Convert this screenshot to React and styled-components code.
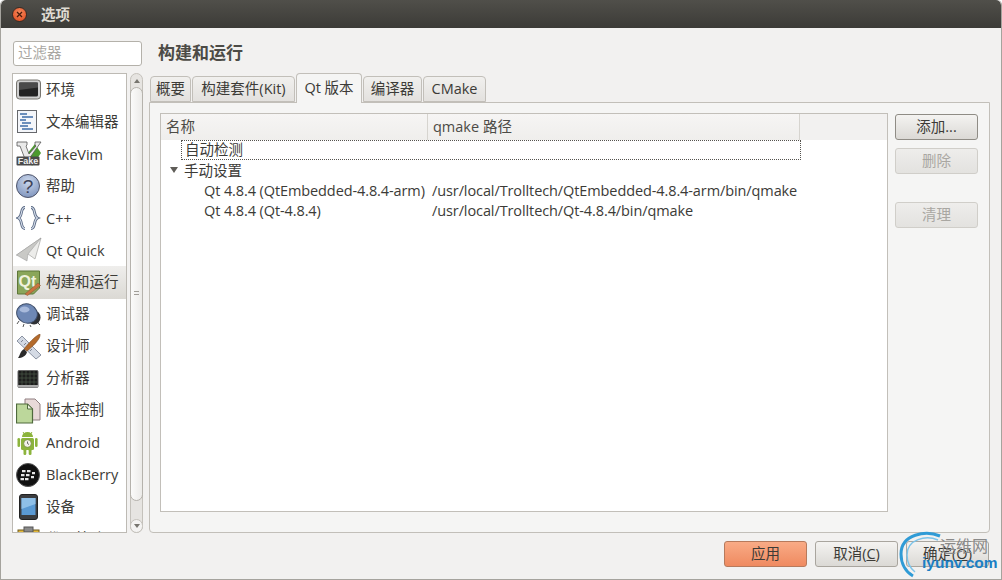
import React from 'react';
import styled, { createGlobalStyle } from 'styled-components';

const FONT = '"Open Sans", "Noto Sans", "Noto Sans CJK SC", sans-serif';

const GlobalStyle = createGlobalStyle`
  html, body {
    margin: 0;
    padding: 0;
    background: #ffffff;
  }
  body {
    font-family: ${FONT};
    font-size: 14.5px;
    color: #3c3b37;
  }
`;

const Window = styled.div`
  position: relative;
  width: 1002px;
  height: 580px;
  box-sizing: border-box;
  display: flex;
  flex-direction: column;
  background: #f2f1f0;
  border-radius: 5px 5px 0 0;
  border-bottom: 1px solid #a5a39d;
  border-left: 1px solid #a5a39d;
  border-right: 1px solid #a5a39d;
  overflow: hidden;
`;

const TitleBar = styled.div`
  height: 28px;
  flex: none;
  display: flex;
  align-items: center;
  gap: 14px;
  padding-left: 11px;
  background: linear-gradient(#504f4a, #3c3b37);
  color: #dfdbd2;
  font-size: 14.5px;
  font-weight: 700;
  border-radius: 5px 5px 0 0;
`;

const TitleText = styled.span`
  padding-bottom: 2px;
`;

const CloseButton = styled.div`
  width: 15px;
  height: 15px;
  margin-top: 1px;
  border-radius: 50%;
  background: radial-gradient(circle at 50% 35%, #f58a5d, #e0461b);
  border: 1px solid #3a2a22;
  box-sizing: border-box;
  display: flex;
  align-items: center;
  justify-content: center;
`;

const Main = styled.div`
  flex: 1;
  min-height: 0;
  display: flex;
  gap: 6px;
  padding: 13px 11px 0 11px;
`;

const Sidebar = styled.div`
  width: 131px;
  flex: none;
  display: flex;
  flex-direction: column;
  gap: 7px;
`;

const Filter = styled.div`
  height: 25px;
  box-sizing: border-box;
  width: 129px;
  margin-left: 1px;
  border: 1px solid #b4b1aa;
  border-radius: 3px;
  background: #ffffff;
  color: #a9a7a2;
  padding-left: 4px;
  line-height: 22px;
`;

const SideRow = styled.div`
  display: flex;
  gap: 3px;
  height: 460px;
`;

const CategoryList = styled.div`
  width: 115px;
  box-sizing: border-box;
  border: 1px solid #bdbab4;
  background: #ffffff;
  overflow: hidden;
`;

const Category = styled.div`
  height: 32.08px;
  display: flex;
  align-items: center;
  gap: 4px;
  padding-left: 3px;
  color: #3c3b37;
  white-space: nowrap;
  background: ${(p) => (p.$active ? 'linear-gradient(#efeeec, #dbd9d4)' : 'transparent')};
`;

const CategoryLabel = styled.span`
  padding-bottom: ${(p) => (p.$latin ? 0 : 4)}px;
`;

const IconBox = styled.span`
  width: 26px;
  height: 26px;
  flex: none;
  display: block;
`;

const ScrollTrack = styled.div`
  position: relative;
  width: 13px;
  box-sizing: border-box;
  border: 1px solid #c4c1bb;
  border-radius: 7px;
  background: #e6e4e1;
`;

const ScrollThumb = styled.div`
  position: absolute;
  left: -1px;
  top: 13px;
  width: 13px;
  height: 414px;
  box-sizing: border-box;
  border: 1px solid #b5b2ac;
  border-radius: 7px;
  background: linear-gradient(90deg, #fbfbfa, #ecebe9);
  display: flex;
  align-items: center;
  justify-content: center;
`;

const Grip = styled.div`
  width: 5px;
  height: 6px;
  background: repeating-linear-gradient(#a09d97 0 1px, transparent 1px 3px);
`;

const ArrowUp = styled.div`
  position: absolute;
  left: 3px;
  top: 5px;
  border-left: 3px solid transparent;
  border-right: 3px solid transparent;
  border-bottom: 4px solid #77756f;
`;

const Stepper = styled.div`
  position: absolute;
  left: -1px;
  bottom: -1px;
  width: 13px;
  height: 14px;
  box-sizing: border-box;
  border: 1px solid #c4c1bb;
  border-radius: 7px 7px 7px 7px;
  background: #f4f3f2;
  display: flex;
  align-items: center;
  justify-content: center;
`;

const ArrowDown = styled.div`
  border-left: 3px solid transparent;
  border-right: 3px solid transparent;
  border-top: 4px solid #77756f;
`;

const Content = styled.div`
  flex: 1;
  min-width: 0;
  display: flex;
  flex-direction: column;
`;

const Heading = styled.div`
  height: 32px;
  padding-left: 9px;
  font-size: 17px;
  font-weight: 700;
  line-height: 23px;
  color: #4c4b46;
`;

const TabBar = styled.div`
  display: flex;
  height: 29px;
  align-items: flex-end;
  padding-left: 1px;
  gap: 1px;
  position: relative;
  z-index: 1;
`;

const Tab = styled.div`
  width: ${(p) => p.$w}px;
  height: ${(p) => (p.$active ? 30 : 26)}px;
  box-sizing: border-box;
  text-align: center;
  line-height: ${(p) => (p.$active ? 27 : 23)}px;
  border: 1px solid #c2bfb9;
  border-bottom: ${(p) => (p.$active ? 'none' : '1px solid #c2bfb9')};
  border-radius: 4px 4px 0 0;
  background: ${(p) => (p.$active ? '#f5f5f4' : 'linear-gradient(#f1f0ee, #e3e1de)')};
  margin-bottom: ${(p) => (p.$active ? -1 : 0)}px;
  white-space: nowrap;
`;

const Pane = styled.div`
  width: 841px;
  height: 431px;
  box-sizing: border-box;
  border: 1px solid #c2bfb9;
  border-radius: 0 0 4px 4px;
  background: #f5f5f4;
  padding: 10px 10px;
  display: flex;
  gap: 7px;
`;

const Tree = styled.div`
  width: 728px;
  height: 399px;
  box-sizing: border-box;
  border: 1px solid #c2bfb9;
  background: #ffffff;
  display: flex;
  flex-direction: column;
`;

const TreeHeader = styled.div`
  height: 26px;
  flex: none;
  display: flex;
  background: #f2f1f0;
`;

const HeaderCell = styled.div`
  width: ${(p) => p.$w}px;
  box-sizing: border-box;
  padding-left: 5px;
  line-height: 26px;
  border-right: 1px solid #d6d4cf;
  background: linear-gradient(#f6f5f4, #efeeec);
  color: #4c4b46;
`;

const TreeRow = styled.div`
  height: 20.5px;
  display: flex;
  align-items: center;
  white-space: nowrap;
  letter-spacing: ${(p) => (p.$latin ? '-0.1px' : 'normal')};
`;

const AutoRow = styled.div`
  width: 620px;
  height: 19.5px;
  margin-left: 20px;
  box-sizing: border-box;
  border: 1px dotted #55534e;
  line-height: 18px;
  padding-left: 3px;
`;

const Caret = styled.span`
  width: 0;
  height: 0;
  margin: 0 6px 0 9px;
  border-left: 4px solid transparent;
  border-right: 4px solid transparent;
  border-top: 6px solid #5f5d58;
`;

const NameCell = styled.span`
  width: 271px;
  flex: none;
  box-sizing: border-box;
  padding-left: 43px;
`;

const Buttons = styled.div`
  display: flex;
  flex-direction: column;
  width: 83px;
  gap: 8px;
  padding-top: 1px;
`;

const Btn = styled.div`
  width: 83px;
  height: 26px;
  flex: none;
  box-sizing: border-box;
  border-radius: 3px;
  text-align: center;
  line-height: 24px;
  white-space: nowrap;
  border: 1px solid #a9a59e;
  color: #3c3b37;
  background: linear-gradient(#f4f3f1, #dbd9d5);
  ${(p) => p.$primary && 'border-color: #8f8c85;'}
  ${(p) => p.$disabled && `
    color: #a9a7a2;
    border-color: #d0cec9;
    background: linear-gradient(#eeedeb, #e3e2df);
  `}
  ${(p) => p.$apply && `
    border-color: #b77a5c;
    background: linear-gradient(#f9ab86, #ef8a60);
  `}
  ${(p) => p.$gapTop && `margin-top: ${p.$gapTop}px;`}
`;

const Footer = styled.div`
  height: 46px;
  flex: none;
  box-sizing: border-box;
  display: flex;
  justify-content: flex-end;
  gap: 8px;
  padding: 8px 12px 0 0;
`;

const Mnemonic = styled.span`
  text-decoration: underline;
`;

const Watermark = styled.div`
  position: absolute;
  left: 895px;
  top: 530px;
  width: 104px;
  height: 48px;
  pointer-events: none;
`;

const WatermarkCn = styled.div`
  position: absolute;
  left: 44px;
  top: 6px;
  color: #8a8a8a;
  font-size: 16px;
  line-height: 20px;
`;

const WatermarkEn = styled.div`
  position: absolute;
  left: 26px;
  top: 24px;
  color: #1b7fc4;
  font-family: "Liberation Sans", sans-serif;
  font-size: 15.5px;
  font-weight: 700;
  line-height: 18px;
  white-space: nowrap;
`;

const icons = {
  env: (
    <svg viewBox="0 0 26 26" width="26" height="26">
      <rect x="0.5" y="3" width="24" height="19" rx="3" fill="#cfcfcf" stroke="#77756f" />
      <rect x="3" y="5.500" width="19" height="14" rx="1.500" fill="#232323" />
      <path d="M3 5.500h19v5L3 13z" fill="#4a4a4a" />
    </svg>
  ),
  text: (
    <svg viewBox="0 0 26 26" width="26" height="26">
      <rect x="1.500" y="1.500" width="19" height="22" fill="#f4f6fa" stroke="#66686c" />
      <path d="M4 5h7M6 8h11M4 11h6M6 14h9M4 17h8M6 20h11" stroke="#3f6ea8" strokeWidth="1.400" />
    </svg>
  ),
  vim: (
    <svg viewBox="0 0 26 26" width="26" height="26">
      <path d="M11 13l8-10 6 9-9 13z" fill="#4d9a2e" />
      <path d="M1 1h10v3l-1 1 3 8 7-8-1-1V1h6L13 18H9L4 5H1z" fill="#e9e9e9" stroke="#555" strokeWidth="0.800" />
      <rect x="0.500" y="15.500" width="23" height="9" fill="#4a4a4a" rx="1" />
      <text x="12" y="23" textAnchor="middle" fontFamily="Liberation Sans, sans-serif" fontSize="9" fontWeight="700" fill="#efefef">Fake</text>
    </svg>
  ),
  help: (
    <svg viewBox="0 0 26 26" width="26" height="26">
      <defs>
        <radialGradient id="helpFill" cx="50%" cy="30%" r="75%">
          <stop offset="0" stopColor="#ccd8ec" />
          <stop offset="1" stopColor="#7c92bc" />
        </radialGradient>
      </defs>
      <circle cx="12" cy="13" r="11.500" fill="url(#helpFill)" stroke="#50556a" />
      <text x="12" y="20" textAnchor="middle" fontFamily="Liberation Sans, sans-serif" fontSize="19" fill="#3d4258">?</text>
    </svg>
  ),
  cpp: (
    <svg viewBox="0 0 26 26" width="26" height="26">
      <path d="M9 2.500C4 2.500 7 11 2.500 13 7 15 4 23.500 9 23.500M15 2.500c5 0 2 8.500 6.500 10.500C17 15 20 23.500 15 23.500" fill="none" stroke="#5b6a84" strokeWidth="2.800" />
      <path d="M9 2.500C4 2.500 7 11 2.500 13 7 15 4 23.500 9 23.500M15 2.500c5 0 2 8.500 6.500 10.500C17 15 20 23.500 15 23.500" fill="none" stroke="#d3dcea" strokeWidth="1.100" />
    </svg>
  ),
  quick: (
    <svg viewBox="0 0 26 26" width="26" height="26">
      <path d="M0.500 18L25 1 19 22 12 17z" fill="#ececea" stroke="#a5a5a2" strokeWidth="0.700" />
      <path d="M0.500 18L25 1 12 17 11 24z" fill="#c9c9c6" stroke="#999" strokeWidth="0.500" />
    </svg>
  ),
  build: (
    <svg viewBox="0 0 26 26" width="26" height="26">
      <path d="M1.500 1h22v17l-6 6h-16z" fill="#8aa65a" stroke="#5d7638" />
      <text x="11.500" y="17" textAnchor="middle" fontFamily="Liberation Sans, sans-serif" fontSize="16" fontWeight="700" fill="#f0f2dd">Qt</text>
      <path d="M9 24l13-11 2.500 2.500-13 10z" fill="#c9743f" stroke="#8e5b3a" strokeWidth="0.600" />
    </svg>
  ),
  debug: (
    <svg viewBox="0 0 26 26" width="26" height="26">
      <path d="M3 19l-2 3M8 22l-1 3M14 23l1 2M21 20l3 3" stroke="#555" strokeWidth="1" />
      <ellipse cx="18" cy="15.500" rx="6.500" ry="7" fill="#2f3136" />
      <ellipse cx="11" cy="11.500" rx="10.500" ry="9.500" transform="rotate(25 11 11.500)" fill="#6e88b5" stroke="#3e4d68" />
      <ellipse cx="8.500" cy="7.500" rx="5" ry="3" fill="#a8badb" />
    </svg>
  ),
  design: (
    <svg viewBox="0 0 26 26" width="26" height="26">
      <path d="M1 7l5-5 19 19-5 4z" fill="#d4dae4" stroke="#8b93a3" />
      <path d="M5 8l2-2M8 11l2-2M11 14l2-2M14 17l2-2" stroke="#7d8493" />
      <path d="M24 0c1 5-8 13-13 17l-3-2C12 10 19 2 24 0z" fill="#b46b2c" stroke="#7d481d" strokeWidth="0.600" />
      <path d="M8 15l3 3c-1 4-5 6-9 6 2-2 2-7 6-9z" fill="#2b2b2b" />
    </svg>
  ),
  analyze: (
    <svg viewBox="0 0 26 26" width="26" height="26">
      <rect x="2" y="4.500" width="20" height="17" rx="1" fill="#1d1d1d" stroke="#666" />
      <path d="M6 5v14M10 5v14M14 5v14M18 5v14M3 8h18M3 12h18M3 16h18" stroke="#4b5a48" strokeWidth="0.700" />
      <rect x="2" y="19" width="20" height="2.500" fill="#a9a9a9" />
    </svg>
  ),
  version: (
    <svg viewBox="0 0 26 26" width="26" height="26">
      <path d="M9 1h10l5 5v16H9z" fill="#e8d9d8" stroke="#8f7f80" />
      <path d="M0.500 6h11l5 5v14H0.500z" fill="#bcd79b" stroke="#4f6a3d" strokeWidth="1.200" />
      <path d="M11.500 6v5h5z" fill="#eef5e2" stroke="#4f6a3d" />
    </svg>
  ),
  android: (
    <svg viewBox="0 0 26 26" width="26" height="26">
      <path d="M6 7a5.500 5 0 0 1 11 0z" fill="#8cb43c" />
      <path d="M7 2l2 3M16 2l-2 3" stroke="#8cb43c" />
      <rect x="5" y="8" width="13" height="12" rx="1.500" fill="#8cb43c" />
      <rect x="1.500" y="8" width="2.600" height="9" rx="1.300" fill="#8cb43c" />
      <rect x="19" y="8" width="2.600" height="9" rx="1.300" fill="#8cb43c" />
      <rect x="7.500" y="19" width="2.800" height="6" rx="1.300" fill="#8cb43c" />
      <rect x="12.700" y="19" width="2.800" height="6" rx="1.300" fill="#8cb43c" />
      <circle cx="11.500" cy="13.500" r="3.800" fill="#f2f2e8" stroke="#607a2a" strokeWidth="0.600" />
      <path d="M11.500 11.500v2l1.500 1" stroke="#444" fill="none" strokeWidth="0.800" />
    </svg>
  ),
  blackberry: (
    <svg viewBox="0 0 26 26" width="26" height="26">
      <circle cx="12" cy="13" r="11.500" fill="#111" stroke="#555" />
      <path d="M6 8h3.500v2.300H6zM11 8h3.500v2.300H11zM5 12h3.500v2.300H5zM10 12h3.500v2.300H10zM4.500 16H8v2.300H4.500zM9 16h3.500v2.300H9zM16 10h3v2.300h-3zM15 14h3v2.300h-3z" fill="#e6e6e6" />
    </svg>
  ),
  device: (
    <svg viewBox="0 0 26 26" width="26" height="26">
      <rect x="3.500" y="0.500" width="18" height="25" rx="2.500" fill="#3b3d40" stroke="#222" />
      <rect x="5.500" y="4" width="14" height="17" fill="#5a9ad4" />
      <path d="M5.500 4h14v6L5.500 15z" fill="#8fc0e8" />
    </svg>
  ),
  clip: (
    <svg viewBox="0 0 26 26" width="26" height="26">
      <rect x="2" y="4" width="21" height="21" fill="#e3b93b" stroke="#6f5b1f" />
      <rect x="8" y="1" width="9" height="5" fill="#8a8a8a" stroke="#555" />
    </svg>
  ),
};

const categories = [
  { icon: 'env', label: '环境' },
  { icon: 'text', label: '文本编辑器' },
  { icon: 'vim', label: 'FakeVim', latin: true },
  { icon: 'help', label: '帮助' },
  { icon: 'cpp', label: 'C++', latin: true },
  { icon: 'quick', label: 'Qt Quick', latin: true },
  { icon: 'build', label: '构建和运行', active: true },
  { icon: 'debug', label: '调试器' },
  { icon: 'design', label: '设计师' },
  { icon: 'analyze', label: '分析器' },
  { icon: 'version', label: '版本控制' },
  { icon: 'android', label: 'Android', latin: true },
  { icon: 'blackberry', label: 'BlackBerry', latin: true },
  { icon: 'device', label: '设备' },
  { icon: 'clip', label: '代码粘贴' },
];

const tabs = [
  ['概要', 41],
  ['构建套件(Kit)', 103],
  ['Qt 版本', 66, true],
  ['编译器', 59],
  ['CMake', 63],
];

const versions = [
  ['Qt 4.8.4 (QtEmbedded-4.8.4-arm)', '/usr/local/Trolltech/QtEmbedded-4.8.4-arm/bin/qmake'],
  ['Qt 4.8.4 (Qt-4.8.4)', '/usr/local/Trolltech/Qt-4.8.4/bin/qmake'],
];

export default function App() {
  return (
    <>
      <GlobalStyle />
      <Window>
        <TitleBar>
          <CloseButton>
            <svg viewBox="0 0 7 7" width="7" height="7">
              <path d="M1 1l5 5M6 1L1 6" stroke="#4a1c0c" strokeWidth="1.300" />
            </svg>
          </CloseButton>
          <TitleText>选项</TitleText>
        </TitleBar>
        <Main>
          <Sidebar>
            <Filter>过滤器</Filter>
            <SideRow>
              <CategoryList>
                {categories.map(({ icon, label, latin, active }) => (
                  <Category key={label} $active={active}>
                    <IconBox>{icons[icon]}</IconBox>
                    <CategoryLabel $latin={latin}>{label}</CategoryLabel>
                  </Category>
                ))}
              </CategoryList>
              <ScrollTrack>
                <ArrowUp />
                <ScrollThumb><Grip /></ScrollThumb>
                <Stepper><ArrowDown /></Stepper>
              </ScrollTrack>
            </SideRow>
          </Sidebar>
          <Content>
            <Heading>构建和运行</Heading>
            <TabBar>
              {tabs.map(([label, w, active]) => (
                <Tab key={label} $w={w} $active={active}>{label}</Tab>
              ))}
            </TabBar>
            <Pane>
              <Tree>
                <TreeHeader>
                  <HeaderCell $w={267}>名称</HeaderCell>
                  <HeaderCell $w={372}>qmake 路径</HeaderCell>
                </TreeHeader>
                <AutoRow>自动检测</AutoRow>
                <TreeRow><Caret />手动设置</TreeRow>
                {versions.map(([name, path]) => (
                  <TreeRow key={name} $latin>
                    <NameCell>{name}</NameCell>
                    {path}
                  </TreeRow>
                ))}
              </Tree>
              <Buttons>
                <Btn $primary>添加...</Btn>
                <Btn $disabled>删除</Btn>
                <Btn $disabled $gapTop={20}>清理</Btn>
              </Buttons>
            </Pane>
          </Content>
        </Main>
        <Footer>
          <Btn $apply>应用</Btn>
          <Btn>取消(<Mnemonic>C</Mnemonic>)</Btn>
          <Btn>确定(<Mnemonic>O</Mnemonic>)</Btn>
        </Footer>
        <Watermark>
          <svg viewBox="0 0 50 48" width="50" height="48">
            <path d="M44 6C30 0 5 4 5 24c0 10 5 18 12 22" fill="none" stroke="#2f9bd6" strokeWidth="3" />
            <path d="M42 10C30 5 11 9 11 25c0 7 3 13 8 17" fill="none" stroke="#7cc4ea" strokeWidth="1.500" />
          </svg>
          <WatermarkCn>运维网</WatermarkCn>
          <WatermarkEn>iyunv.com</WatermarkEn>
        </Watermark>
      </Window>
    </>
  );
}
